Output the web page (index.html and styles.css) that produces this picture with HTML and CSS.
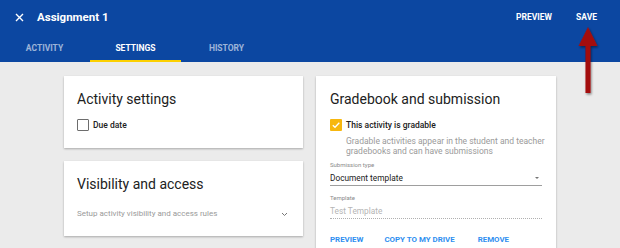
FILE: index.html
```html
<html>
   <head>
      <title>Assignment 1</title>
      <link rel="stylesheet" href="styles.css">
   </head>
   <body>
      <header class="appbar">
         <div class="topbar">
            <svg class="close" width="9" height="9" viewBox="0 0 9 9">
               <path d="M1 1 L8 8 M8 1 L1 8" stroke="#fff" stroke-width="1.4" fill="none" />
            </svg>
            <span class="title">Assignment 1</span>
            <span class="spacer"></span>
            <a class="action">PREVIEW</a>
            <a class="action">SAVE</a>
         </div>
         <nav class="tabs">
            <a class="tab">ACTIVITY</a>
            <a class="tab active">SETTINGS</a>
            <a class="tab">HISTORY</a>
         </nav>
      </header>
      <div class="content">
         <div class="column">
            <div class="card">
               <h2 class="card-title">Activity settings</h2>
               <label class="check-row">
                  <span class="box"></span>
                  <span class="check-label">Due date</span>
               </label>
            </div>
            <div class="card">
               <h2 class="card-title">Visibility and access</h2>
               <div class="expand-row">
                  <span class="hint">Setup activity visibility and access rules</span>
                  <svg class="chevron" width="7" height="5" viewBox="0 0 7 5">
                     <path d="M1 1 L3.5 3.5 L6 1" stroke="#777" stroke-width="1" fill="none" />
                  </svg>
               </div>
            </div>
         </div>
         <div class="column">
            <div class="card card-wide">
               <h2 class="card-title">Gradebook and submission</h2>
               <label class="check-row">
                  <span class="box checked">
                     <svg width="12" height="12" viewBox="0 0 12 12">
                        <path d="M2.8 6.2 L5 8.3 L9.3 3.8" stroke="#fff" stroke-width="1.3" fill="none" />
                     </svg>
                  </span>
                  <span class="check-label">This activity is gradable</span>
               </label>
               <p class="description">Gradable activities appear in the student and teacher<br>gradebooks and can have submissions</p>
               <div class="field">
                  <div class="field-label">Submission type</div>
                  <div class="field-value select">
                     <span>Document template</span>
                     <span class="caret"></span>
                  </div>
               </div>
               <div class="field">
                  <div class="field-label">Template</div>
                  <div class="field-value disabled">Test Template</div>
               </div>
               <div class="buttons">
                  <a class="link-button">PREVIEW</a>
                  <a class="link-button">COPY TO MY DRIVE</a>
                  <a class="link-button">REMOVE</a>
               </div>
            </div>
         </div>
      </div>
      <svg class="arrow" width="30" height="76" viewBox="0 0 30 76">
         <defs>
            <filter id="shadow" x="-50%" y="-20%" width="200%" height="140%">
               <feDropShadow dx="1" dy="1.5" stdDeviation="1.2" flood-color="#000" flood-opacity="0.45" />
            </filter>
         </defs>
         <path d="M14 2 L23.5 21 L16.5 21 L16.5 68 L11.5 68 L11.5 21 L4.5 21 Z" fill="#a30d0d" filter="url(#shadow)" />
      </svg>
   </body>
</html>
```

FILE: styles.css
```css
body {
   margin: 0;
   background: #ebebeb;
   font-family: Roboto, "Liberation Sans", sans-serif;
   color: #212121;
   position: relative;
   overflow: hidden;
}
.appbar {
   background: #0c47a1;
   color: #fff;
}
.topbar {
   height: 34px;
   display: flex;
   align-items: center;
   padding: 0 23px 0 15px;
}
.close {
   margin-right: 13px;
}
.title {
   font-size: 11.5px;
   font-weight: bold;
}
.spacer {
   flex: 1;
}
.action {
   font-size: 8.5px;
   font-weight: bold;
   margin-left: 24px;
}
.tabs {
   display: flex;
   height: 28px;
   margin-left: -1px;
}
.tab {
   width: 91px;
   box-sizing: border-box;
   display: flex;
   align-items: center;
   justify-content: center;
   font-size: 8.5px;
   font-weight: bold;
   color: rgba(255, 255, 255, 0.6);
   border-bottom: 2px solid transparent;
   padding-top: 2px;
}
.tab.active {
   color: #fff;
   border-bottom-color: #fcd000;
}
.content {
   width: 492px;
   margin: 14px auto 0;
   display: grid;
   grid-template-columns: 239px 240px;
   gap: 13px;
   align-items: start;
}
.column {
   display: flex;
   flex-direction: column;
   gap: 13px;
}
.card {
   background: #fff;
   box-shadow: 0 1px 2px rgba(0, 0, 0, 0.28);
   padding: 14px 13px 17px;
}
.card-wide {
   padding: 14px 14px 20px;
}
.card-title {
   margin: 0;
   font-size: 14px;
   font-weight: normal;
   line-height: 18px;
   color: #212121;
}
.check-row {
   display: flex;
   align-items: center;
   margin-top: 11px;
   height: 12px;
}
.box {
   width: 12px;
   height: 12px;
   box-sizing: border-box;
   border: 1.5px solid #6d6d6d;
   border-radius: 1px;
   margin-right: 4px;
   flex-shrink: 0;
}
.box.checked {
   border: none;
   background: #f7b70f;
}
.box svg {
   display: block;
}
.check-label {
   font-size: 8.5px;
   font-weight: 500;
   color: #212121;
}
.expand-row {
   display: flex;
   align-items: center;
   justify-content: space-between;
   margin-top: 14px;
   height: 12px;
   padding-right: 2px;
}
.hint {
   font-size: 8px;
   color: #9a9a9a;
}
.chevron {
   margin-top: 2px;
}
.description {
   margin: 6px 0 0 16px;
   font-size: 8.5px;
   line-height: 9.5px;
   color: #9a9a9a;
   white-space: nowrap;
}
.field {
   margin-top: 5px;
}
.field + .field {
   margin-top: 8px;
}
.field-label {
   font-size: 6px;
   line-height: 7px;
   color: #8a8a8a;
}
.field-value {
   font-size: 8.3px;
   line-height: 12px;
   padding-top: 4px;
   padding-bottom: 1px;
   border-bottom: 1px solid #9e9e9e;
}
.select {
   display: flex;
   justify-content: space-between;
   align-items: center;
}
.caret {
   width: 0;
   height: 0;
   border-left: 2.5px solid transparent;
   border-right: 2.5px solid transparent;
   border-top: 2.5px solid #757575;
   margin-right: 3px;
}
.disabled {
   color: #b5b5b5;
   border-bottom: 1px dotted #b0b0b0;
}
.buttons {
   display: flex;
   margin-top: 16px;
}
.link-button {
   font-size: 7.9px;
   font-weight: bold;
   color: #2f8ff0;
   margin-right: 21px;
}
.link-button + .link-button + .link-button {
   margin-left: 2px;
}
.arrow {
   position: absolute;
   left: 574px;
   top: 25px;
}
```
